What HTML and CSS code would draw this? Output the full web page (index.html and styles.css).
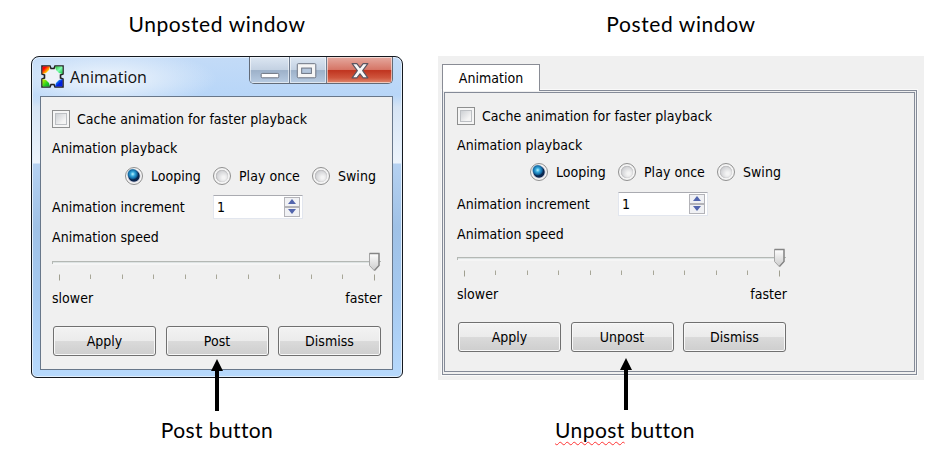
FILE: index.html
```
<!DOCTYPE html>
<html lang="en">
<head>
<meta charset="utf-8">
<title>Animation window</title>
<link rel="stylesheet" href="styles.css">
</head>
<body>
<svg class="defs" width="0" height="0" aria-hidden="true">
  <defs>
    <linearGradient id="thumbFill" x1="0" y1="0" x2="0" y2="1"><stop offset="0" stop-color="#fff"/><stop offset=".5" stop-color="#e4e4e4"/><stop offset="1" stop-color="#ccc"/></linearGradient>
    <symbol id="slider" viewBox="0 0 330 36">
      <path d="M0 10.5H329" stroke="#b4b8b4"/>
      <path d="M.5 10v3" stroke="#b4b8b4"/>
      <path d="M1 11.5H328" stroke="#dde3e3"/>
      <path d="M1 13H328" stroke="#fafafa"/>
      <path d="M7.5 23.5v6" stroke="#a09f90"/>
      <path d="M38.500 23.500v4.500M70.500 23.500v4.500M101.500 23.500v4.500M133.500 23.500v4.500M164.500 23.500v4.500M196.500 23.500v4.500M227.500 23.500v4.500M259.500 23.500v4.500M290.500 23.500v4.500" stroke="#a8a798"/>
      <path d="M322.500 23.500v6" stroke="#a09f90"/>
      <path d="M317.500 2.500h9.500v12l-4.800 5-4.700-5z" fill="url(#thumbFill)" stroke="#a6a6a6" stroke-linejoin="round"/>
      <path d="M317.500 2.500h9.500v12l-4.500 5" fill="none" stroke="#858585" stroke-width="1.300"/>
    </symbol>
    <symbol id="arrow" viewBox="0 0 12 52"><path d="M6 0l6 12H8v40H4V12H0z"/></symbol>
  </defs>
</svg>
<main class="page">
  <section class="figure figure-left">
    <h2 class="caption">Unposted window</h2>
    <div class="window">
      <header class="titlebar">
        <svg class="logo" viewBox="0 0 23 23">
          <defs>
            <linearGradient id="g1" x1="0" y1="0" x2="1" y2="1"><stop offset=".25" stop-color="#f00"/><stop offset=".65" stop-color="#ffd000"/></linearGradient>
            <linearGradient id="g2" x1="0" y1="0" x2="1" y2="1"><stop offset="0" stop-color="#2bbd30"/><stop offset=".5" stop-color="#80ffb0"/><stop offset="1" stop-color="#10c040"/></linearGradient>
            <linearGradient id="g3" x1="0" y1="0" x2="1" y2="1"><stop offset="0" stop-color="#d8f000"/><stop offset=".6" stop-color="#20d020"/><stop offset="1" stop-color="#109030"/></linearGradient>
            <linearGradient id="g4" x1="0" y1="0" x2="1" y2="1"><stop offset=".1" stop-color="#20d0ff"/><stop offset=".6" stop-color="#0020e0"/></linearGradient>
          </defs>
          <path d="M1 1h8l1 2.500h3L14 1h8v8l-2.500 1v3l2.500 1v8h-8l-1-2.500h-3L9 22H1v-8l2.500-1v-3L1 9z" fill="#eef2f8" stroke="#222" stroke-width="1.600"/>
          <path d="M1.500 1.500H9L8 5 5 8 1.500 9z" fill="url(#g1)"/><path d="M14 1.500h7.500V9L18 8l-3-3z" fill="url(#g2)"/>
          <path d="M1.500 14L5 15l3 3 1 3.500H1.500z" fill="url(#g3)"/><path d="M21.500 14v7.500H14l1-3.500 3-3z" fill="url(#g4)"/>
        </svg>
        <span class="window-title">Animation</span>
        <div class="controls">
          <span class="control minimize"><svg viewBox="0 0 40 26"><rect x="11.500" y="16.500" width="18" height="4.500" rx="1" fill="#fff" stroke="#6b7280"/></svg></span>
          <span class="control maximize"><svg viewBox="0 0 37 26"><rect x="7.500" y="6.500" width="19" height="14.500" rx="1" fill="#f6f6f6" stroke="#6b7280"/><rect x="12" y="11" width="10" height="5.500" fill="#b4c6dc" stroke="#6b7280"/></svg></span>
          <span class="control close"><svg viewBox="0 0 66 26"><path d="M25.500 6.500h4.800l3.200 4 3.200-4h4.800l-5.300 7.200 5.300 7.300h-4.800l-3.200-4.200-3.200 4.200h-4.800l5.300-7.300z" fill="#f8f8f8" stroke="#5c5560" stroke-width="1.200" stroke-linejoin="round"/></svg></span>
        </div>
      </header>
      <div class="client">
        <form class="form">
          <label class="row cache"><span class="checkbox"></span><span>Cache animation for faster playback</span></label>
          <div class="row playback">Animation playback</div>
          <div class="row radios">
            <label class="option option-loop"><span class="radio checked"></span>Looping</label>
            <label class="option option-once"><span class="radio"></span>Play once</label>
            <label class="option"><span class="radio"></span>Swing</label>
          </div>
          <div class="row increment"><span class="increment-label">Animation increment</span><span class="spinner"><span class="value">1</span><span class="steps"><i class="step up"></i><i class="step down"></i></span></span></div>
          <div class="row speed">Animation speed</div>
          <svg class="slider"><use href="#slider"/></svg>
          <div class="row ends"><span>slower</span><span>faster</span></div>
          <div class="buttons"><span class="button">Apply</span><span class="button">Post</span><span class="button">Dismiss</span></div>
        </form>
      </div>
      <svg class="arrow arrow-left"><use href="#arrow"/></svg>
    </div>
    <p class="note">Post button</p>
  </section>
  <section class="figure figure-right">
    <h2 class="caption">Posted window</h2>
    <div class="posted">
      <div class="tab">Animation</div>
      <div class="pane">
        <form class="form form-posted">
          <label class="row cache"><span class="checkbox"></span><span>Cache animation for faster playback</span></label>
          <div class="row playback">Animation playback</div>
          <div class="row radios">
            <label class="option option-loop"><span class="radio checked"></span>Looping</label>
            <label class="option option-once"><span class="radio"></span>Play once</label>
            <label class="option"><span class="radio"></span>Swing</label>
          </div>
          <div class="row increment"><span class="increment-label">Animation increment</span><span class="spinner"><span class="value">1</span><span class="steps"><i class="step up"></i><i class="step down"></i></span></span></div>
          <div class="row speed">Animation speed</div>
          <svg class="slider"><use href="#slider"/></svg>
          <div class="row ends"><span>slower</span><span>faster</span></div>
          <div class="buttons"><span class="button">Apply</span><span class="button">Unpost</span><span class="button">Dismiss</span></div>
        </form>
      </div>
      <svg class="arrow arrow-right"><use href="#arrow"/></svg>
    </div>
    <p class="note"><span class="misspelt">Unpost</span> button</p>
  </section>
</main>
</body>
</html>
```
FILE: styles.css
```
* { box-sizing: border-box; }
body { margin: 0; background: #fff; color: #000; font: 14px/18px "DejaVu Sans Condensed", "DejaVu Sans", sans-serif; font-stretch: condensed; letter-spacing: 0.03px; overflow: hidden; }
.defs { position: absolute; }
.page { display: flex; width: 950px; height: 460px; padding-left: 31px; }
.figure { display: flex; flex-direction: column; }
.figure-left { width: 372px; margin-right: 35px; }
.figure-right { width: 486px; }
.caption, .note { margin: 0; font: 400 21px/26px Lato, sans-serif; letter-spacing: 0.6px; text-align: center; white-space: nowrap; }
.caption { height: 56px; padding-top: 11px; }
.note { padding-top: 39px; letter-spacing: 0.4px; }
.figure-right .note { padding: 37px 112px 0 0; }

.window { position: relative; height: 322px; padding: 2px 9px 7px 8px; border: 1px solid #14181e; border-radius: 8px 8px 6px 6px; background: radial-gradient(ellipse 110px 30px at 75px 22px, #e6f0fb 20%, transparent 100%), linear-gradient(180deg, #c3dbf7 0, #b8d6f8 38px, #d6e4f4 50px, #edf4fc 106px, #b5d1f1 107px, #9fc1e6 170px, #a5c9f0 240px, #b7d9fc 100%); box-shadow: inset 0 0 0 1px #e2effc; }
.titlebar { display: flex; height: 37px; }
.logo { width: 23px; height: 23px; margin: 6px 6px 0 1px; }
.window-title { padding-top: 7px; font: 16px/22px "Open Sans", sans-serif; letter-spacing: 0; color: #111; }
.controls { display: flex; height: 27px; margin: -2px 0 0 auto; border: 1px solid #626b78; border-top: 0; border-radius: 0 0 5px 5px; overflow: hidden; }
.control { height: 26px; background: linear-gradient(#dce6f2 0, #c3d1e2 50%, #9db1c9 52%, #b7cbe2 100%); box-shadow: inset 0 0 0 1px rgba(255,255,255,.55); }
.control svg { display: block; width: 100%; height: 26px; }
.minimize { width: 40px; border-right: 1px solid #6f7c8e; }
.maximize { width: 37px; border-right: 1px solid #6f7c8e; }
.close { width: 65px; background: linear-gradient(#e5aaa0 0, #d67667 48%, #c03520 52%, #cf553d 80%, #e08a70 100%); }
.client { height: 274px; padding: 8px 0 0 11px; border: 1px solid #68778a; background: #f0f0f0; }

.form { display: flex; flex-direction: column; width: 330px; margin: 0; }
.row { display: flex; align-items: center; white-space: nowrap; }
.cache { height: 28px; gap: 7px; }
.checkbox { width: 18px; height: 18px; border: 1px solid #8e8f8f; background: linear-gradient(135deg, #cdd0d4, #f4f4f4 75%) content-box; padding: 3px; box-shadow: inset 0 0 0 2px #f5f5f5, inset 0 0 0 3px #bcbfc3; }
.playback { height: 30px; }
.radios { height: 25px; padding-left: 73px; }
.option { display: flex; align-items: center; gap: 8px; }
.option-loop { width: 88px; }
.option-once { width: 99px; }
.radio { width: 18px; height: 18px; border: 1px solid #909090; border-radius: 50%; background: radial-gradient(circle at 60% 60%, #f4f4f4 10%, transparent 50%), radial-gradient(circle, #d2d3d6 40%, #bcbcbe 52%, #f4f4f4 58%); }
.radio.checked { background: radial-gradient(circle at 42% 38%, #b8f4ff 0, #35a8dc 16%, #126aa4 32%, transparent 42%), radial-gradient(circle, #0b2850 46%, #bbc 53%, #f4f4f4 60%); }
.increment { height: 35px; padding-top: 2px; }
.increment-label { width: 161px; }
.spinner { display: flex; align-items: center; justify-content: space-between; width: 90px; height: 24px; padding: 0 2px 0 3px; border: 1px solid #e2e6ee; border-top-color: #aaabb1; background: #fff; }
.steps { display: flex; flex-direction: column; }
.step { display: flex; align-items: center; justify-content: center; width: 16px; height: 10px; border: 1px solid #b3b3b8; background: #f0f1f4; }
.step::before { content: ""; border: 4px solid transparent; }
.up::before { border-top: 0; border-bottom: 5px solid #5265ad; }
.down::before { border-bottom: 0; border-top: 5px solid #5265ad; }
.speed { height: 28px; }
.slider { width: 330px; height: 36px; }
.ends { height: 22px; justify-content: space-between; }
.buttons { display: flex; gap: 9.500px; padding: 17px 0 0 1px; }
.button { width: 103px; height: 30px; border: 1px solid #707070; border-radius: 3px; background: linear-gradient(#f3f3f3 0, #ebebeb 49%, #dadada 51%, #cecece 100%); box-shadow: inset 0 0 0 1px #f8f8f8; line-height: 29px; text-align: center; }

.posted { position: relative; height: 324px; padding: 8px 7px 4px 4px; background: #f0f0f0; }
.tab { position: relative; z-index: 1; width: 98px; height: 27px; border: 1px solid #898c95; border-bottom: 0; background: #fff; text-align: center; line-height: 27px; }
.pane { height: 285px; margin-top: -1px; padding: 9px 0 0 12px; border: 3px double #858b98; border-bottom-width: 4px; outline: 1px solid #fafafa; }
.form-posted .playback { height: 29px; }
.form-posted .radios { height: 26px; }
.form-posted .speed { height: 27px; }
.arrow { position: absolute; width: 12px; height: 52px; }
.arrow-left { left: 179px; top: 302px; }
.arrow-right { left: 182px; top: 302px; }
.misspelt { text-decoration: underline wavy #f33 1px; text-decoration-skip-ink: none; text-underline-offset: 3px; }
```
